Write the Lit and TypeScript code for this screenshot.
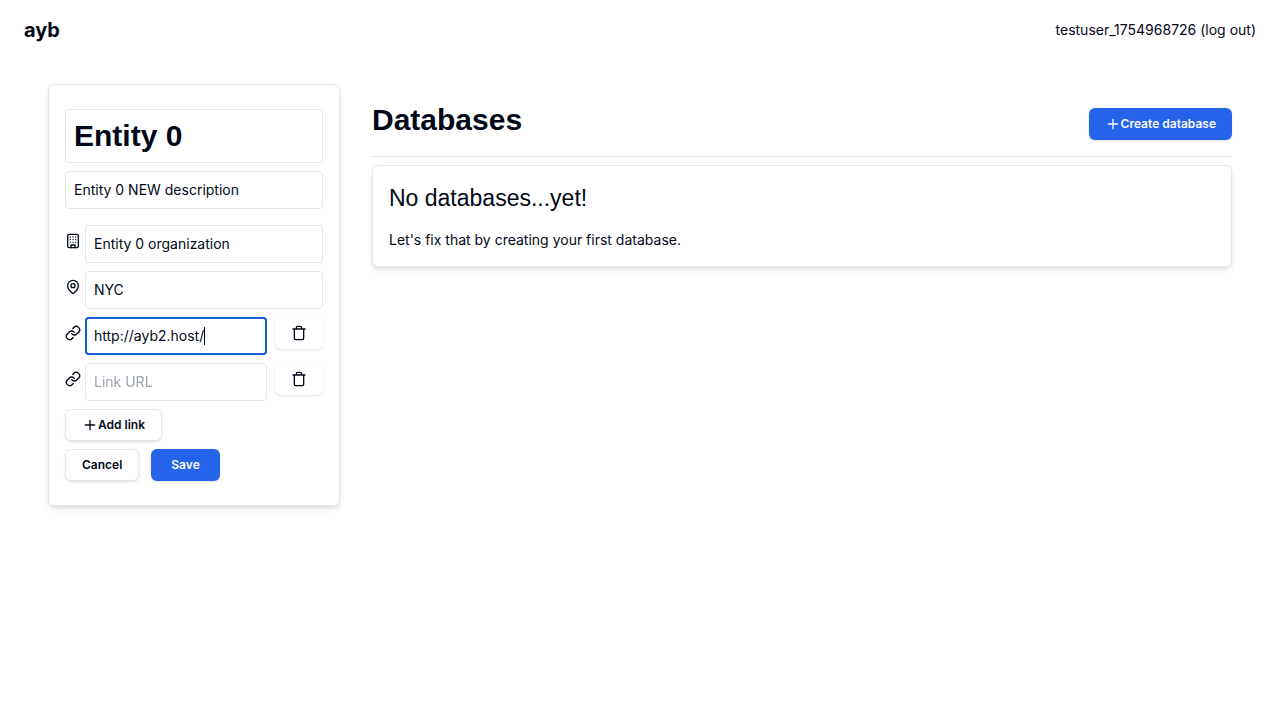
import { LitElement, html, css, svg, nothing } from "lit";
import { customElement, query } from "lit/decorators.js";

const icon = (body: unknown) => html`<svg class="icon" viewBox="0 0 24 24" fill="none" stroke="currentColor" stroke-width="2" stroke-linecap="round" stroke-linejoin="round" aria-hidden="true">${body}</svg>`;

const building = icon(svg`<rect x="4" y="2" width="16" height="20" rx="2"/><path d="M9 22v-4h6v4M8 6h.01M16 6h.01M12 6h.01M12 10h.01M12 14h.01M16 10h.01M16 14h.01M8 10h.01M8 14h.01"/>`);
const pin = icon(svg`<path d="M20 10c0 6-8 12-8 12s-8-6-8-12a8 8 0 0 1 16 0Z"/><circle cx="12" cy="10" r="3"/>`);
const link = icon(svg`<path d="M10 13a5 5 0 0 0 7.54.54l3-3a5 5 0 0 0-7.07-7.07l-1.72 1.71"/><path d="M14 11a5 5 0 0 0-7.54-.54l-3 3a5 5 0 0 0 7.07 7.07l1.71-1.71"/>`);
const trash = icon(svg`<path d="M3 6h18M19 6v14c0 1-1 2-2 2H7c-1 0-2-1-2-2V6M8 6V4c0-1 1-2 2-2h4c1 0 2 1 2 2v2"/>`);
const plus = icon(svg`<path d="M5 12h14M12 5v14"/>`);

@customElement("app-root")
export class AppRoot extends LitElement {
  @query("#link-0") activeLink!: HTMLInputElement;

  static styles = css`
    :host {
      display: block;
      min-height: 100vh;
      background: #fff;
      color: #020817;
      font: 14px/20px Inter, "Liberation Sans", sans-serif;
    }
    * { box-sizing: border-box; }
    a { color: inherit; text-decoration: none; }
    h1, h2, p { margin: 0; }
    .icon { display: block; width: 16px; height: 16px; flex: none; }
    .header {
      display: flex;
      align-items: center;
      justify-content: space-between;
      height: 60px;
      padding: 0 24px;
    }
    .brand { font-size: 20px; line-height: 28px; font-weight: 700; }
    .main {
      display: grid;
      grid-template-columns: 292px minmax(0, 1fr);
      align-items: start;
      gap: 32px;
      padding: 24px 48px;
    }
    .card {
      border: 1px solid #e2e8f0;
      border-radius: 6px;
      background: #fff;
      box-shadow: 0 4px 6px -1px rgb(0 0 0 / 0.1), 0 2px 4px -2px rgb(0 0 0 / 0.1);
    }
    .profile {
      display: flex;
      flex-direction: column;
      gap: 8px;
      padding: 24px 16px;
    }
    .field {
      display: block;
      width: 100%;
      min-width: 0;
      height: 38px;
      padding: 7px 8px 9px;
      border: 1px solid #e5e7eb;
      border-radius: 4px;
      background: transparent;
      color: inherit;
      font: inherit;
    }
    .field::placeholder { color: #9ca3af; opacity: 1; }
    .field:focus {
      border-color: #1062cc;
      outline: 2px solid #1062cc;
      outline-offset: -2px;
      caret-color: transparent;
    }
    .name, .title, .subtitle { font-family: "Liberation Sans", Arial, sans-serif; }
    .name { height: 54px; padding: 8px; font-size: 30px; line-height: 36px; font-weight: 700; }
    .about { margin-bottom: 8px; }
    .row { display: flex; align-items: flex-start; }
    .row label { padding: 8px 4px 0 0; }
    .row .button { margin-left: 8px; }
    .entry { position: relative; flex: 1; min-width: 0; }
    .caret {
      position: absolute;
      top: 10px;
      left: 119px;
      width: 1px;
      height: 18px;
      background: #020817;
      visibility: hidden;
    }
    .field:focus + .caret { visibility: visible; }
    .button {
      display: inline-flex;
      align-items: center;
      justify-content: center;
      flex: none;
      height: 32px;
      padding: 0 16px;
      border: 0;
      border-radius: 6px;
      background: #fff;
      color: inherit;
      font: 600 12px/16px Inter, "Liberation Sans", sans-serif;
      box-shadow: 0 1px 3px rgb(0 0 0 / 0.1), 0 1px 2px -1px rgb(0 0 0 / 0.1);
    }
    .outlined { border: 1px solid #e2e8f0; }
    .primary { background: #2563eb; color: #f8fafc; }
    .actions { display: flex; gap: 12px; }
    .save { padding: 0 20px; }
    .titlebar {
      display: flex;
      align-items: flex-start;
      justify-content: space-between;
      padding-bottom: 16px;
      border-bottom: 1px solid #e2e8f0;
      margin-bottom: 8px;
    }
    .title { margin-top: 18px; font-size: 30px; line-height: 36px; font-weight: 700; }
    .titlebar .button { margin-top: 24px; }
    .empty { display: grid; gap: 16px; padding: 16px; }
    .subtitle { font-size: 23px; line-height: 32px; font-weight: 400; }
  `;

  firstUpdated() {
    const end = this.activeLink.value.length;
    this.activeLink.focus();
    this.activeLink.setSelectionRange(end, end);
  }

  render() {
    return html`
      <header class="header">
        <a class="brand" href="#">ayb</a>
        <a href="#">testuser_1754968726 (log out)</a>
      </header>
      <main class="main">
        <form class="card profile" @submit=${(e: Event) => e.preventDefault()}>
          <input class="field name" aria-label="Display name" .value=${"Entity 0"} />
          <input class="field about" aria-label="Description" .value=${"Entity 0 NEW description"} />
          <div class="row">
            <label for="organization" aria-label="Organization">${building}</label>
            <input class="field" id="organization" .value=${"Entity 0 organization"} />
          </div>
          <div class="row">
            <label for="location" aria-label="Location">${pin}</label>
            <input class="field" id="location" .value=${"NYC"} />
          </div>
          ${["http://ayb2.host/", ""].map((url, i) => html`
            <div class="row">
              <label for="link-${i}" aria-label="Link">${link}</label>
              <div class="entry">
                <input class="field" id="link-${i}" placeholder="Link URL" .value=${url} />
                ${url ? html`<span class="caret"></span>` : nothing}
              </div>
              <button class="button" type="button" aria-label="Remove link">${trash}</button>
            </div>`)}
          <div class="actions"><button class="button outlined" type="button">${plus}Add link</button></div>
          <div class="actions">
            <button class="button outlined" type="button">Cancel</button>
            <button class="button primary save" type="submit">Save</button>
          </div>
        </form>
        <section>
          <div class="titlebar">
            <h1 class="title">Databases</h1>
            <button class="button primary" type="button">${plus}Create database</button>
          </div>
          <div class="card empty">
            <h2 class="subtitle">No databases...yet!</h2>
            <p>Let's fix that by creating your first database.</p>
          </div>
        </section>
      </main>
    `;
  }
}
